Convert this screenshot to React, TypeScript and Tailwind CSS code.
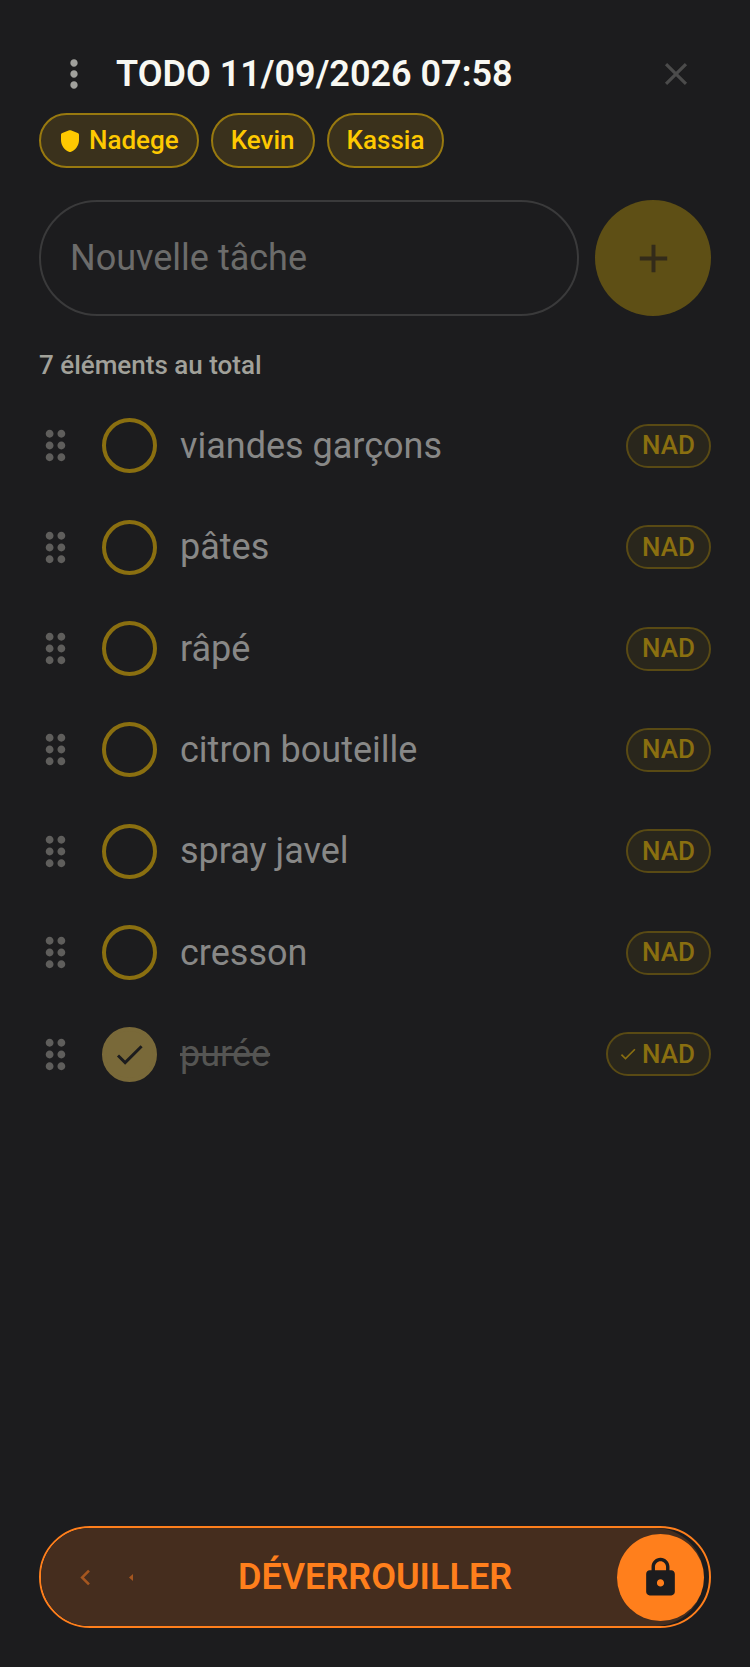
import { useState } from 'react';
import { MdAdd, MdCheck, MdChevronLeft, MdClose, MdDragIndicator, MdLock, MdMoreVert } from 'react-icons/md';

type Task = { id: number; label: string; owner: string; done: boolean };

const members = [
    { name: 'Nadege', admin: true },
    { name: 'Kevin', admin: false },
    { name: 'Kassia', admin: false },
];

const initialTasks: Task[] = [
    { id: 1, label: 'viandes garçons', owner: 'NAD', done: false },
    { id: 2, label: 'pâtes', owner: 'NAD', done: false },
    { id: 3, label: 'râpé', owner: 'NAD', done: false },
    { id: 4, label: 'citron bouteille', owner: 'NAD', done: false },
    { id: 5, label: 'spray javel', owner: 'NAD', done: false },
    { id: 6, label: 'cresson', owner: 'NAD', done: false },
    { id: 7, label: 'purée', owner: 'NAD', done: true },
];

const ShieldIcon = () => (
    <svg viewBox="0 0 18 22" className="ml-0.5 h-[22px] w-[18px]" fill="currentColor" aria-hidden="true">
        <path d="M8.2.3 1.3 2.9C.5 3.2 0 3.9 0 4.7V10c0 5.5 3.6 10.6 8.5 11.9.3.1.7.1 1 0C14.4 20.6 18 15.5 18 10V4.7c0-.8-.5-1.5-1.3-1.8L9.8.3a2.3 2.3 0 0 0-1.6 0Z" />
    </svg>
);

const TaskRow = ({ task, onToggle }: { task: Task; onToggle: (id: number) => void }) => {
    const inputId = `task-${task.id}`;

    return (
        <li className="flex items-center">
            <button type="button" aria-label={`Déplacer ${task.label}`} className="-ml-[7px] text-[#5f5e5c]">
                <MdDragIndicator size={47} />
            </button>
            <span className="relative ml-[23px] grid size-[55px] shrink-0">
                <input
                    id={inputId}
                    type="checkbox"
                    checked={task.done}
                    onChange={() => onToggle(task.id)}
                    className="size-[55px] appearance-none rounded-full border-4 border-[#8a6f10] checked:border-[#796939] checked:bg-[#796939]"
                />
                {task.done && (
                    <MdCheck size={35} className="pointer-events-none absolute inset-0 m-auto text-[#1c1c1e]" />
                )}
            </span>
            <label
                htmlFor={inputId}
                className={`ml-[23px] flex-1 text-4xl ${task.done ? 'text-[#555553] line-through' : 'text-[#888887]'}`}
            >
                {task.label}
            </label>
            <span className="flex h-11 items-center gap-1 rounded-full border-2 border-[#594a14] bg-[#29261c] px-[14px] text-[26px] font-medium text-[#8a6f10]">
                {task.done && <MdCheck size={20} className="-ml-1" />}
                {task.owner}
            </span>
        </li>
    );
};

const App = () => {
    const [tasks, setTasks] = useState(initialTasks);
    const [draft, setDraft] = useState('');

    const toggleTask = (id: number) => {
        setTasks((list) => list.map((t) => (t.id === id ? { ...t, done: !t.done } : t)));
    };

    const addTask = () => {
        if (!draft.trim()) return;
        setTasks((list) => [...list, { id: Date.now(), label: draft.trim(), owner: 'NAD', done: false }]);
        setDraft('');
    };

    return (
        <div className="flex min-h-screen flex-col bg-[#1c1c1e] px-[39px] pt-[47px] pb-[39px] font-['Roboto',sans-serif]">
            {/* Header */}
            <header className="flex h-[54px] items-center pl-[13px] pr-4">
                <button type="button" aria-label="Menu" className="text-[#a1a19d]">
                    <MdMoreVert size={44} />
                </button>
                <h1 className="ml-5 flex-1 text-4xl font-semibold text-[#f8f8f2]">TODO 11/09/2026 07:58</h1>
                <button type="button" aria-label="Fermer" className="text-[#4b4b4b]">
                    <MdClose size={38} />
                </button>
            </header>

            {/* Members */}
            <ul className="mt-3 flex gap-3">
                {members.map((member) => (
                    <li
                        key={member.name}
                        className="flex h-[55px] items-center gap-[10px] rounded-full border-2 border-[#98790f] bg-[#3a311c] px-[18px] text-[26px] font-medium text-[#fec901]"
                    >
                        {member.admin && <ShieldIcon />}
                        {member.name}
                    </li>
                ))}
            </ul>

            {/* New task */}
            <form
                className="mt-8 flex gap-4"
                onSubmit={(e) => {
                    e.preventDefault();
                    addTask();
                }}
            >
                <input
                    type="text"
                    aria-label="Nouvelle tâche"
                    placeholder="Nouvelle tâche"
                    value={draft}
                    onChange={(e) => setDraft(e.target.value)}
                    className="h-[116px] min-w-0 flex-1 rounded-full border-2 border-[#3a3a3b] px-[29px] text-4xl text-[#f8f8f2] outline-none placeholder:text-[#6c6c6b]"
                />
                <button
                    type="submit"
                    aria-label="Ajouter"
                    className="grid size-[116px] shrink-0 place-items-center rounded-full bg-[#5e4f15] text-[#332b1a]"
                >
                    <MdAdd size={47} />
                </button>
            </form>

            <p className="mt-[31px] text-[26px] leading-9 font-medium text-[#a1a19a]">{tasks.length} éléments au total</p>

            {/* Tasks */}
            <ul className="mt-3 grid min-h-[710px] auto-rows-fr">
                {tasks.map((task) => (
                    <TaskRow key={task.id} task={task} onToggle={toggleTask} />
                ))}
            </ul>

            {/* Slide to unlock */}
            <button
                type="button"
                className="mt-auto flex h-[102px] items-center rounded-full border-2 border-[#ff7f1c] pr-[5px] text-4xl font-semibold text-[#ff7f1c]"
            >
                <span className="flex h-full flex-1 items-center rounded-full bg-[#452d1e]">
                    <span className="flex flex-1 items-center gap-7 pl-[5px] text-[#a5561f]">
                        <MdChevronLeft size={31} className="ml-6" />
                        <svg viewBox="0 0 4 7" className="h-[7px] w-1" fill="currentColor" aria-hidden="true">
                            <path d="M4 0v7L0 3.5Z" />
                        </svg>
                    </span>
                    <span>DÉVERROUILLER</span>
                    <span className="flex flex-1 justify-end">
                        <span className="grid size-[87px] place-items-center rounded-full bg-[#ff7f1c] text-[#1c1c1e]">
                            <MdLock size={43} />
                        </span>
                    </span>
                </span>
            </button>
        </div>
    );
};

export default App;
